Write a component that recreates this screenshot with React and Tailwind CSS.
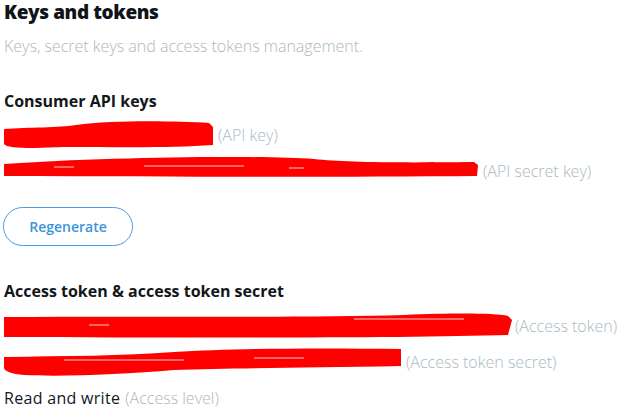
import React from 'react'

const font = { fontFamily: '"Open Sans", "Noto Sans", sans-serif' }

// red marker blobs that hide the secret values
const Scribble = ({ width, d, streaks = [] }) => (
    <svg width={width} height={36} viewBox={`0 0 ${width} 36`} className="block shrink-0">
        <path d={d} fill="#ff0000" />
        {streaks.map((s, i) => (
            <line key={i} x1={s[0]} y1={s[1]} x2={s[2]} y2={s[1]} stroke="#ffffff" strokeWidth="1" opacity="0.8" />
        ))}
    </svg>
)

const Row = ({ children, label, gap = 'ml-[5px]' }) => (
    <div className="flex items-center h-[36px] text-[16px]">
        {children}
        <span className={`${gap} text-[#aab8c2] font-light whitespace-nowrap`}>{label}</span>
    </div>
)

export default function App() {
    return (
        <div className="bg-white w-[625px] h-[409px] overflow-hidden pl-[4px] text-[#14171a]" style={font}>
            <div className="text-[19px] font-black leading-[24px] tracking-[-0.4px] text-[#0f1419]">
                Keys and tokens
            </div>
            <p className="mt-[10px] text-[16px] leading-[24px] font-light text-[#aab8c2]">
                Keys, secret keys and access tokens management.
            </p>

            <div className="mt-[31px] text-[16px] font-bold leading-[24px]">Consumer API keys</div>
            <div className="mt-[4px]">
                <Row label="(API key)">
                    <Scribble
                        width={209}
                        d="M0,12 C25,10 55,11 72,8 C110,3 170,4 205,6 L209,10 L209,28 C170,31 120,30 60,30 L30,31 C12,31 2,30 0,27 Z"
                    />
                </Row>
                <Row label="(API secret key)">
                    <Scribble
                        width={474}
                        d="M0,11 C100,4 250,2 310,6 C340,9 380,10 470,9 L474,12 L473,23 C350,24 200,24 0,23 Z"
                        streaks={[[50, 14, 70], [140, 13, 240], [285, 15, 300]]}
                    />
                </Row>
            </div>

            <button className="mt-[18px] -ml-[1px] w-[130px] h-[39px] rounded-full border border-[#4a9ce6] text-[#3b94d9] text-[14px] font-semibold bg-white">
                Regenerate
            </button>

            <div className="mt-[33px] text-[16px] font-bold leading-[24px]">Access token &amp; access token secret</div>
            <div className="mt-[5px]">
                <Row label="(Access token)" gap="ml-[3px]">
                    <Scribble
                        width={508}
                        d="M0,9 C150,8 300,10 400,7 C450,5 490,5 504,8 L508,12 L504,27 C400,30 200,30 0,29 Z"
                        streaks={[[85, 17, 105], [350, 11, 460]]}
                    />
                </Row>
                <Row label="(Access token secret)">
                    <Scribble
                        width={397}
                        d="M0,13 C60,12 120,12 170,8 C230,4 320,4 397,5 L397,22 C300,24 230,24 170,26 C120,30 60,33 20,31 C8,30 0,27 0,24 Z"
                        streaks={[[60, 16, 180], [250, 14, 300]]}
                    />
                </Row>
                <div className="flex items-center h-[36px] text-[16px]">
                    <span className="tracking-[0.3px]">Read and write</span>
                    <span className="ml-[5px] text-[#aab8c2] font-light">(Access level)</span>
                </div>
            </div>
        </div>
    )
}
